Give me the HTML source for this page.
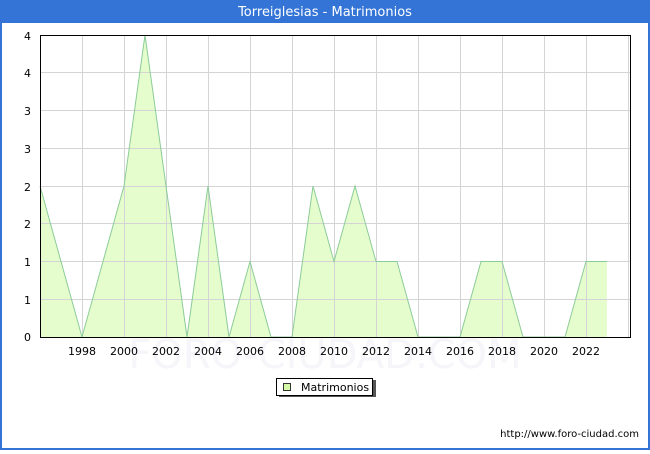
<!DOCTYPE html>
<html><head><style>
body{margin:0;width:650px;height:450px;overflow:hidden;background:#fff;font-family:"DejaVu Sans","Liberation Sans",sans-serif}
</style></head><body>
<svg width="650" height="450" xmlns="http://www.w3.org/2000/svg" font-family="DejaVu Sans, Liberation Sans, sans-serif">
<rect x="0" y="0" width="650" height="450" fill="#3374d6"/>
<rect x="2" y="23" width="646" height="425" fill="#fff"/>
<text x="325" y="16" font-size="13" fill="#fff" text-anchor="middle">Torreiglesias - Matrimonios</text>
<text x="325" y="368" font-size="40" fill="#f5f5fa" text-anchor="middle">FORO-CIUDAD.COM</text>
<polygon fill="#e5fdcc" points="40,337 40,186 61,261.5 82,337 103,261.5 124,186 145,35 166,186 187,337 208,186 229,337 250,261.5 271,337 292,337 313,186 334,261.5 355,186 376,261.5 397,261.5 418,337 439,337 460,337 481,261.5 502,261.5 523,337 544,337 565,337 586,261.5 607,261.5 607,337"/>
<g stroke="#d4d4d4" stroke-width="1">
<line x1="40" x2="630" y1="72.5" y2="72.5"/><line x1="40" x2="630" y1="110.5" y2="110.5"/><line x1="40" x2="630" y1="148.5" y2="148.5"/><line x1="40" x2="630" y1="186.5" y2="186.5"/><line x1="40" x2="630" y1="223.5" y2="223.5"/><line x1="40" x2="630" y1="261.5" y2="261.5"/><line x1="40" x2="630" y1="299.5" y2="299.5"/>
<line x1="82.5" x2="82.5" y1="35" y2="337"/><line x1="124.5" x2="124.5" y1="35" y2="337"/><line x1="166.5" x2="166.5" y1="35" y2="337"/><line x1="208.5" x2="208.5" y1="35" y2="337"/><line x1="250.5" x2="250.5" y1="35" y2="337"/><line x1="292.5" x2="292.5" y1="35" y2="337"/><line x1="334.5" x2="334.5" y1="35" y2="337"/><line x1="376.5" x2="376.5" y1="35" y2="337"/><line x1="418.5" x2="418.5" y1="35" y2="337"/><line x1="460.5" x2="460.5" y1="35" y2="337"/><line x1="502.5" x2="502.5" y1="35" y2="337"/><line x1="544.5" x2="544.5" y1="35" y2="337"/><line x1="586.5" x2="586.5" y1="35" y2="337"/><line x1="628.5" x2="628.5" y1="35" y2="337"/>
</g>
<polyline fill="none" stroke="#8ccc99" stroke-width="1" points="40,186 61,261.5 82,337 103,261.5 124,186 145,35 166,186 187,337 208,186 229,337 250,261.5 271,337 292,337 313,186 334,261.5 355,186 376,261.5 397,261.5 418,337 439,337 460,337 481,261.5 502,261.5 523,337 544,337 565,337 586,261.5 607,261.5"/>
<rect x="40.5" y="35.5" width="590" height="302" fill="none" stroke="#000" stroke-width="1"/>
<g font-size="11" fill="#000" text-anchor="end">
<text x="31" y="40">4</text><text x="31" y="77">4</text><text x="31" y="115">3</text><text x="31" y="153">3</text><text x="31" y="191">2</text><text x="31" y="228">2</text><text x="31" y="266">1</text><text x="31" y="304">1</text><text x="31" y="341">0</text>
</g>
<g font-size="11" fill="#000" text-anchor="middle">
<text x="82" y="355">1998</text><text x="124" y="355">2000</text><text x="166" y="355">2002</text><text x="208" y="355">2004</text><text x="250" y="355">2006</text><text x="292" y="355">2008</text><text x="334" y="355">2010</text><text x="376" y="355">2012</text><text x="418" y="355">2014</text><text x="460" y="355">2016</text><text x="502" y="355">2018</text><text x="544" y="355">2020</text><text x="586" y="355">2022</text>
</g>
<rect x="279" y="380" width="97" height="17" fill="#555"/>
<rect x="276.5" y="378.5" width="96" height="17" fill="#fff" stroke="#000"/>
<rect x="283.5" y="383.5" width="7" height="7" fill="#d6f9a8" stroke="#333"/>
<text x="301" y="391" font-size="11" fill="#000">Matrimonios</text>
<text x="639" y="437" font-size="10" fill="#000" text-anchor="end">http://www.foro-ciudad.com</text>
</svg>
</body></html>
